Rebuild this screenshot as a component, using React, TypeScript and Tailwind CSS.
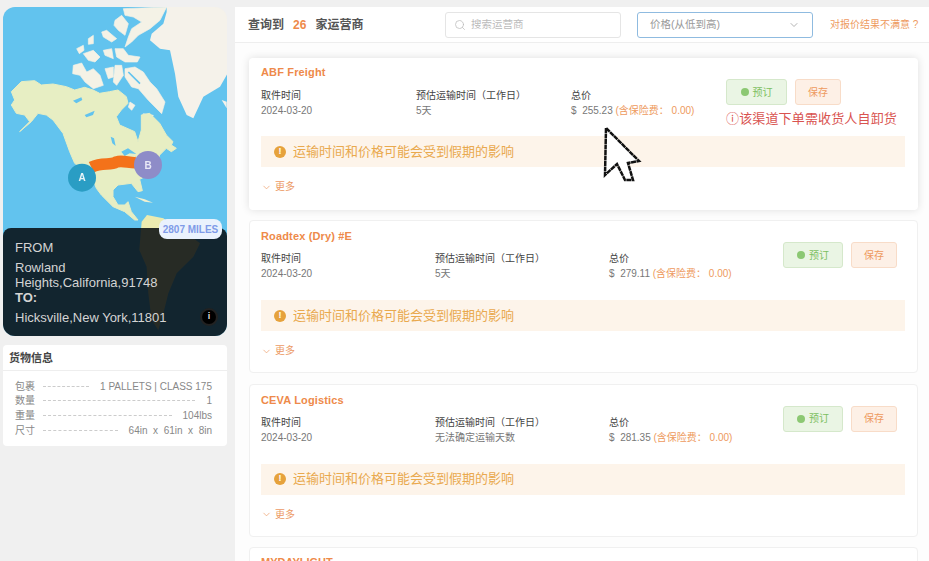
import React from 'react'
import { ChevronDown, Search } from 'lucide-react'

type Carrier = {
  name: string
  days: string
  price: string
}

const carriers: Carrier[] = [
  { name: 'Roadtex (Dry) #E', days: '5天', price: '279.11' },
  { name: 'CEVA Logistics', days: '无法确定运输天数', price: '281.35' },
]

const arctic = [
  'M190,5 L320,0 L300,40 L270,65 L235,85 L215,105 L195,120 L205,90 L215,65 L245,45 L220,30 L195,25 Z',
  'M165,40 L185,25 L205,50 L195,85 L175,70 L162,55 Z',
  'M125,75 L140,70 L170,95 L155,105 L130,90 Z',
  'M85,95 L100,85 L100,110 L85,112 Z',
  'M50,125 L70,115 L72,130 L58,140 Z',
  'M70,140 L100,130 L120,150 L105,165 L85,160 Z',
  'M130,130 L155,125 L160,155 L135,145 Z',
  'M165,125 L190,125 L205,145 L240,150 L232,165 L195,165 L170,150 Z',
  'M40,175 L65,168 L80,195 L100,185 L120,205 L130,235 L100,245 L75,225 L60,205 L38,200 Z',
  'M135,185 L160,180 L160,210 L145,215 Z',
  'M165,175 L185,175 L190,205 L170,235 L160,225 Z',
  'M195,185 L225,180 L250,195 L270,225 L290,245 L315,285 L305,320 L285,300 L265,280 L235,245 L215,240 L195,210 Z',
  'M210,285 L225,295 L215,310 L205,300 Z',
  'M250,320 L280,325 L275,332 L255,330 Z',
]

const northAmerica =
  'M25,35 L55,5 L95,2 L115,15 L150,12 L190,20 L215,30 L245,22 L270,30 L290,40 L320,35 L345,30 L370,50 L375,70 L355,90 L340,110 L350,135 L395,155 L405,185 L415,150 L415,105 L440,100 L470,130 L490,165 L510,185 L505,195 L520,205 L505,215 L490,205 L470,225 L465,240 L445,280 L410,298 L418,332 L405,335 L385,310 L345,315 L330,330 L330,350 L345,375 L365,375 L375,365 L385,395 L405,420 L395,420 L365,395 L330,380 L295,345 L280,325 L265,285 L215,250 L200,215 L180,160 L150,120 L130,105 L105,100 L85,125 L50,155 L80,125 L65,105 L40,100 L25,75 L35,60 Z'

function MapView() {
  return (
    <svg viewBox="9 21 672 987" className="absolute inset-0 w-full h-full blur-[0.5px]">
      <rect x="-20" y="-20" width="740" height="1060" fill="#62c3ee" />
      <path d="M500,10 L500,36 L490,71 L455,101 L450,121 L480,146 L510,151 L525,221 L535,290 L560,345 L580,355 L610,290 L660,260 L700,190 L700,10 Z" fill="#f5f2ea" />
      <path d="M665,300 L680,305 L680,325 Z" fill="#f5f2ea" />
      <g transform="translate(180 21)">
        {arctic.map((d, i) => (
          <path key={i} d={d} fill="#f4f2e6" stroke="#f4f2e6" strokeWidth="2" strokeLinejoin="round" />
        ))}
        <path d="M205,195 L240,230" stroke="#62c3ee" strokeWidth="5" />
      </g>
      <g transform="translate(9 240)">
        <path d={northAmerica} fill="#e7eec3" stroke="#e7eec3" strokeWidth="3" strokeLinejoin="round" />
        <path d="M210,62 L235,52 L238,60 L220,70 Z M245,105 L275,92 L270,105 L250,112 Z M323,170 L333,175 L338,198 L328,190 Z M355,215 L375,205 L400,222 L380,220 L365,228 Z" fill="#62c3ee" />
        <path d="M395,350 L425,358 L450,368 L425,365 Z" fill="#f0f0d0" />
        <path d="M416,425 L432,405 L481,415 L511,440 L551,460 L591,490 L571,530 L521,580 L496,640 L481,700 L466,750 L446,720 L436,640 L431,560 L409,510 Z" fill="#ecebb0" />
        <path d="M265,262 C300,245 320,258 340,246 C360,240 380,250 400,248" fill="none" stroke="#f4721a" strokeWidth="35" />
        <circle cx="237" cy="293" r="42" fill="#2a9dc4" />
        <circle cx="435" cy="255" r="42" fill="#8e8cc8" />
        <text x="237" y="304" textAnchor="middle" fontSize="30" fontWeight="700" fill="#e8f4f8">A</text>
        <text x="435" y="266" textAnchor="middle" fontSize="30" fontWeight="700" fill="#e8e8f6">B</text>
      </g>
    </svg>
  )
}

function GoodsRow({ label, value }: { label: string; value: string }) {
  return (
    <div className="flex items-center h-[14.6px] text-[10px] text-[#888]">
      <span className="w-[28px]">{label}</span>
      <span className="flex-1 border-t border-dashed border-[#ccc] mr-[11px]" />
      <span>{value}</span>
    </div>
  )
}

function Sidebar() {
  return (
    <div className="w-[235px] shrink-0 pl-[3px] pr-[8px]">
      <div className="relative h-[329px] rounded-xl overflow-hidden">
        <MapView />
        <div className="absolute left-0 right-0 bottom-0 h-[108px] rounded-t-lg bg-[#05090d]/85 pl-[12px] pr-[50px] pt-[12px] text-[13px] leading-[15px] text-[#d4d4d4]">
          <div className="mb-[5px]">FROM</div>
          <div>Rowland Heights,California,91748</div>
          <div className="font-bold">TO:</div>
          <div className="mt-[5px] whitespace-nowrap">Hicksville,New York,11801</div>
        </div>
        <div className="absolute left-[156px] top-[212px] w-[63px] h-[20px] rounded-lg bg-[#eaf2fd] flex items-center justify-center text-[10px] font-bold text-[#7f9be8]">
          2807 MILES
        </div>
        <div className="absolute left-[199px] top-[303px] w-[14px] h-[14px] rounded-full bg-black ring-2 ring-[#222] flex items-center justify-center text-[9px] font-bold text-[#ddd]">
          i
        </div>
      </div>
      <div className="mt-[9px] bg-white rounded h-[101px]">
        <div className="h-[26px] pt-[1px] px-[6px] flex items-center border-b border-[#eee] text-[11px] font-bold text-[#444]">货物信息</div>
        <div className="pt-[8px] pl-[12px] pr-[15px]">
          <GoodsRow label="包裹" value="1 PALLETS | CLASS 175" />
          <GoodsRow label="数量" value="1" />
          <GoodsRow label="重量" value="104lbs" />
          <GoodsRow label="尺寸" value={'64in\u00a0 x\u00a0 61in\u00a0 x\u00a0 8in'} />
        </div>
      </div>
    </div>
  )
}

function InfoCol({ label, value, className }: { label: string; value: React.ReactNode; className: string }) {
  return (
    <div className={className}>
      <div className="text-[10px] leading-[15px] text-[#444]">{label}</div>
      <div className="text-[10px] leading-[15px] text-[#777] whitespace-nowrap">{value}</div>
    </div>
  )
}

function Price({ price }: { price: string }) {
  return (
    <>
      $ &nbsp;{price} <span className="text-[#ee9a5e]">(含保险费： 0.00)</span>
    </>
  )
}

function Buttons({ bookClass }: { bookClass: string }) {
  return (
    <div className="flex gap-2">
      <button className={`${bookClass} h-[26px] flex items-center justify-center gap-[4px] rounded-[3px] border border-[#d5e8cb] bg-[#eaf5e4] text-[10px] text-[#7cbf60]`}>
        <span className="w-[8px] h-[8px] rounded-full bg-[#8cc873]" />
        预订
      </button>
      <button className="w-[46px] h-[26px] rounded-[3px] border border-[#f8dcc8] bg-[#fdf0e6] text-[10px] text-[#ee9a5e]">保存</button>
    </div>
  )
}

function Notice() {
  return (
    <div className="h-[31px] mr-[1px] bg-[#fdf4ea] flex items-center pl-[13px] gap-[7px] text-[13px] text-[#e9a94e]">
      <span className="w-[12px] h-[12px] rounded-full bg-[#e6a23c] flex items-center justify-center text-[9px] font-bold text-white">!</span>
      运输时间和价格可能会受到假期的影响
    </div>
  )
}

function More() {
  return (
    <div className="mt-[13px] flex items-center gap-[3px] text-[10px] leading-[14px] text-[#ec9a66]">
      <ChevronDown size={11} strokeWidth={1.5} />
      更多
    </div>
  )
}

function CarrierCard({ carrier }: { carrier: Carrier }) {
  return (
    <div className="h-[153px] shrink-0 bg-white border border-[#f0f0f0] rounded pt-[8px] px-[11px]">
      <div className="text-[11px] leading-[14px] font-bold tracking-[0.15px] text-[#ee8a4a]">{carrier.name}</div>
      <div className="flex mt-[8px] h-[34px]">
        <InfoCol className="w-[174px]" label="取件时间" value="2024-03-20" />
        <InfoCol className="w-[174px]" label="预估运输时间（工作日）" value={carrier.days} />
        <InfoCol className="w-[174px]" label="总价" value={<Price price={carrier.price} />} />
        <div className="-mt-[9px]">
          <Buttons bookClass="w-[60px]" />
        </div>
      </div>
      <div className="mt-[15px]">
        <Notice />
      </div>
      <More />
    </div>
  )
}

function FirstCard() {
  return (
    <div className="h-[151.5px] shrink-0 bg-white rounded shadow-[0_0_8px_rgba(0,0,0,0.12)] pt-[7px] px-[12px]">
      <div className="text-[11px] leading-[14px] font-bold tracking-[0.15px] text-[#ee8a4a]">ABF Freight</div>
      <div className="flex mt-[9px] h-[34px]">
        <InfoCol className="w-[155px]" label="取件时间" value="2024-03-20" />
        <InfoCol className="w-[155px]" label="预估运输时间（工作日）" value="5天" />
        <InfoCol className="w-[155px]" label="总价" value={<Price price="255.23" />} />
        <div className="-mt-[9px]">
          <Buttons bookClass="w-[61px]" />
          <div className="mt-[6px] text-[13px] leading-[16px] tracking-[0.15px] text-[#d9534f] whitespace-nowrap">ⓘ该渠道下单需收货人自卸货</div>
        </div>
      </div>
      <div className="mt-[14px]">
        <Notice />
      </div>
      <More />
    </div>
  )
}

function Cursor() {
  return (
    <svg viewBox="0 0 40 60" className="absolute left-[602px] top-[126px] w-[40px] h-[60px] pointer-events-none">
      <path d="M4,2 L3,49 L15,38 L23,54 L31,54 L26,37 L37,35 Z" fill="#fff" stroke="#111" strokeWidth="2.5" strokeDasharray="5 0.5" />
    </svg>
  )
}

export default function App() {
  return (
    <div className="relative w-[929px] h-[561px] overflow-hidden bg-[#f0f0f0] pt-[7px] flex [font-family:'Liberation_Sans','Noto_Sans_CJK_SC',sans-serif]">
      <Sidebar />
      <div className="flex-1 bg-[#fdfdfd] flex flex-col">
        <div className="h-[36px] shrink-0 bg-white border-b border-[#eee] flex items-center pl-[13px]">
          <div className="w-[197px] text-[12px] font-bold text-[#555] whitespace-nowrap">
            查询到<span className="mx-[9px] text-[#ee8a4a]">26</span>家运营商
          </div>
          <div className="w-[176px] h-[26px] border border-[#e5e5e5] rounded-[3px] flex items-center pl-[8px] gap-[5px] text-[10.5px] text-[#bbb]">
            <Search size={12} strokeWidth={1.5} />
            搜索运营商
          </div>
          <div className="ml-[16px] w-[176px] h-[26px] border border-[#8fbbe0] rounded-[3px] flex items-center justify-between px-[12px] text-[10.5px] text-[#999]">
            价格(从低到高)
            <ChevronDown size={12} strokeWidth={1.5} />
          </div>
          <div className="ml-[17px] text-[10px] text-[#ee9a5e] whitespace-nowrap">对报价结果不满意 ?</div>
        </div>
        <div className="flex-1 overflow-hidden pt-[15px] pl-[14px] pr-[11px] flex flex-col gap-[10.5px]">
          <FirstCard />
          {carriers.map((c) => (
            <CarrierCard key={c.name} carrier={c} />
          ))}
          <div className="h-[153px] shrink-0 bg-white border border-[#f0f0f0] rounded pt-[7px] px-[11px] text-[11px] leading-[14px] font-bold text-[#ee8a4a]">MYDAYLIGHT</div>
        </div>
      </div>
      <Cursor />
    </div>
  )
}
